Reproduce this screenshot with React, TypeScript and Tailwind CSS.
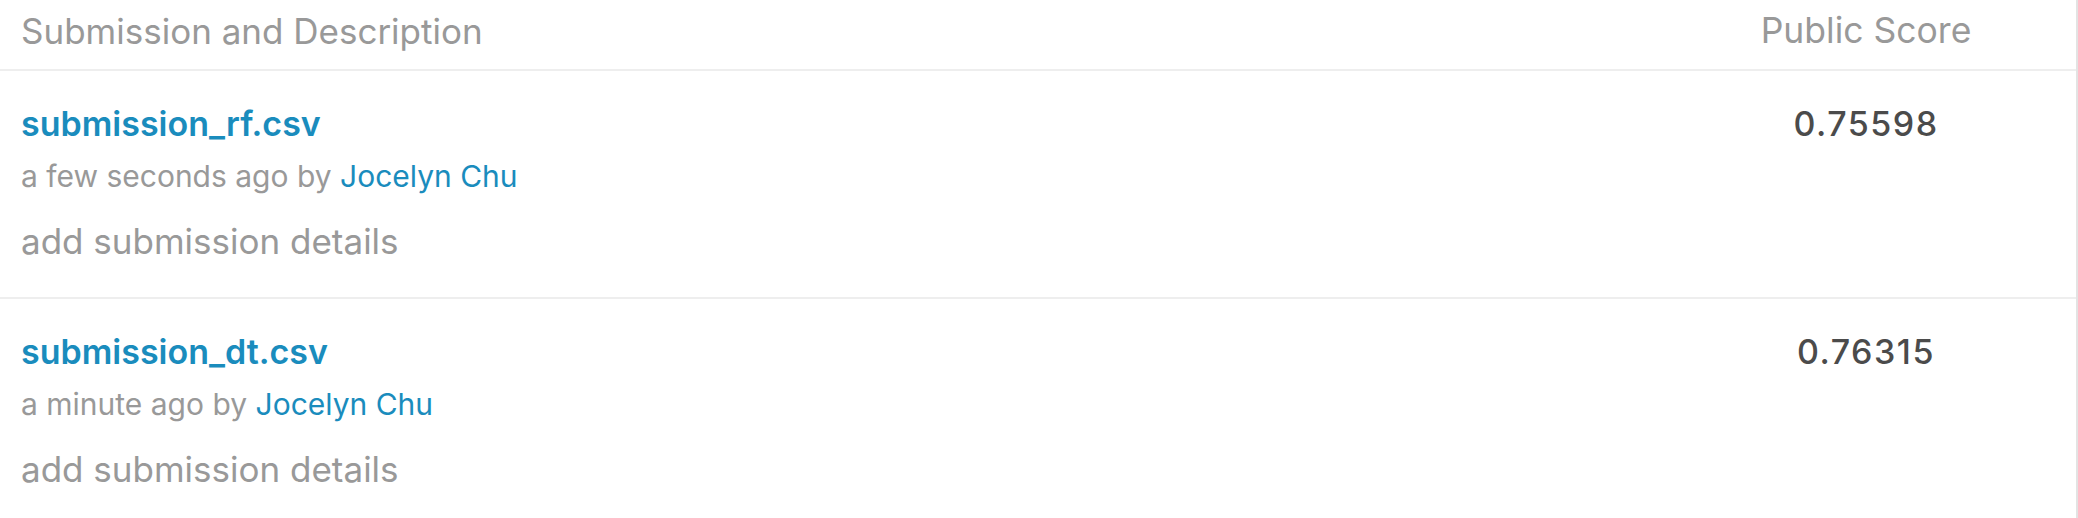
const rows = [
  { file: "submission_rf.csv", when: "a few seconds ago", author: "Jocelyn Chu", score: "0.75598" },
  { file: "submission_dt.csv", when: "a minute ago", author: "Jocelyn Chu", score: "0.76315" },
];

export default function App() {
  return (
    <div className="h-[518px] w-[2078px] overflow-hidden bg-white font-['Inter','Liberation_Sans',sans-serif]">
      <div className="h-full border-r-2 border-[#e3e3e3]">
        <div className="grid grid-cols-[1656px_1fr] border-b-2 border-[#eeeeee] h-[71px]">
          <div className="pl-[21px] pt-[11px] text-[35px] leading-[40px] text-[#999999]">Submission and Description</div>
          <div className="pt-[11px] text-center text-[35.5px] leading-[40px] text-[#999999]">Public Score</div>
        </div>
        {rows.map((row) => (
          <div className="grid grid-cols-[1656px_1fr] border-b-2 border-[#eeeeee] h-[228px]" key={row.file}>
            <div className="pl-[21px] pt-[33px]">
              <a className="block text-[34px] font-semibold leading-[40px] text-[#1a8cbd]" href="#">{row.file}</a>
              <div className="mt-[14px] text-[30px] leading-[36px] text-[#999999]">
                {row.when} by <a className="text-[#1a8cbd]" href="#">{row.author}</a>
              </div>
              <div className="mt-[27px] text-[35px] leading-[40px] text-[#999999]">add submission details</div>
            </div>
            <div className="pt-[33px] text-center text-[34px] font-medium leading-[40px] tracking-[1.5px] text-[#4b4b4b]">{row.score}</div>
          </div>
        ))}
      </div>
    </div>
  );
}
